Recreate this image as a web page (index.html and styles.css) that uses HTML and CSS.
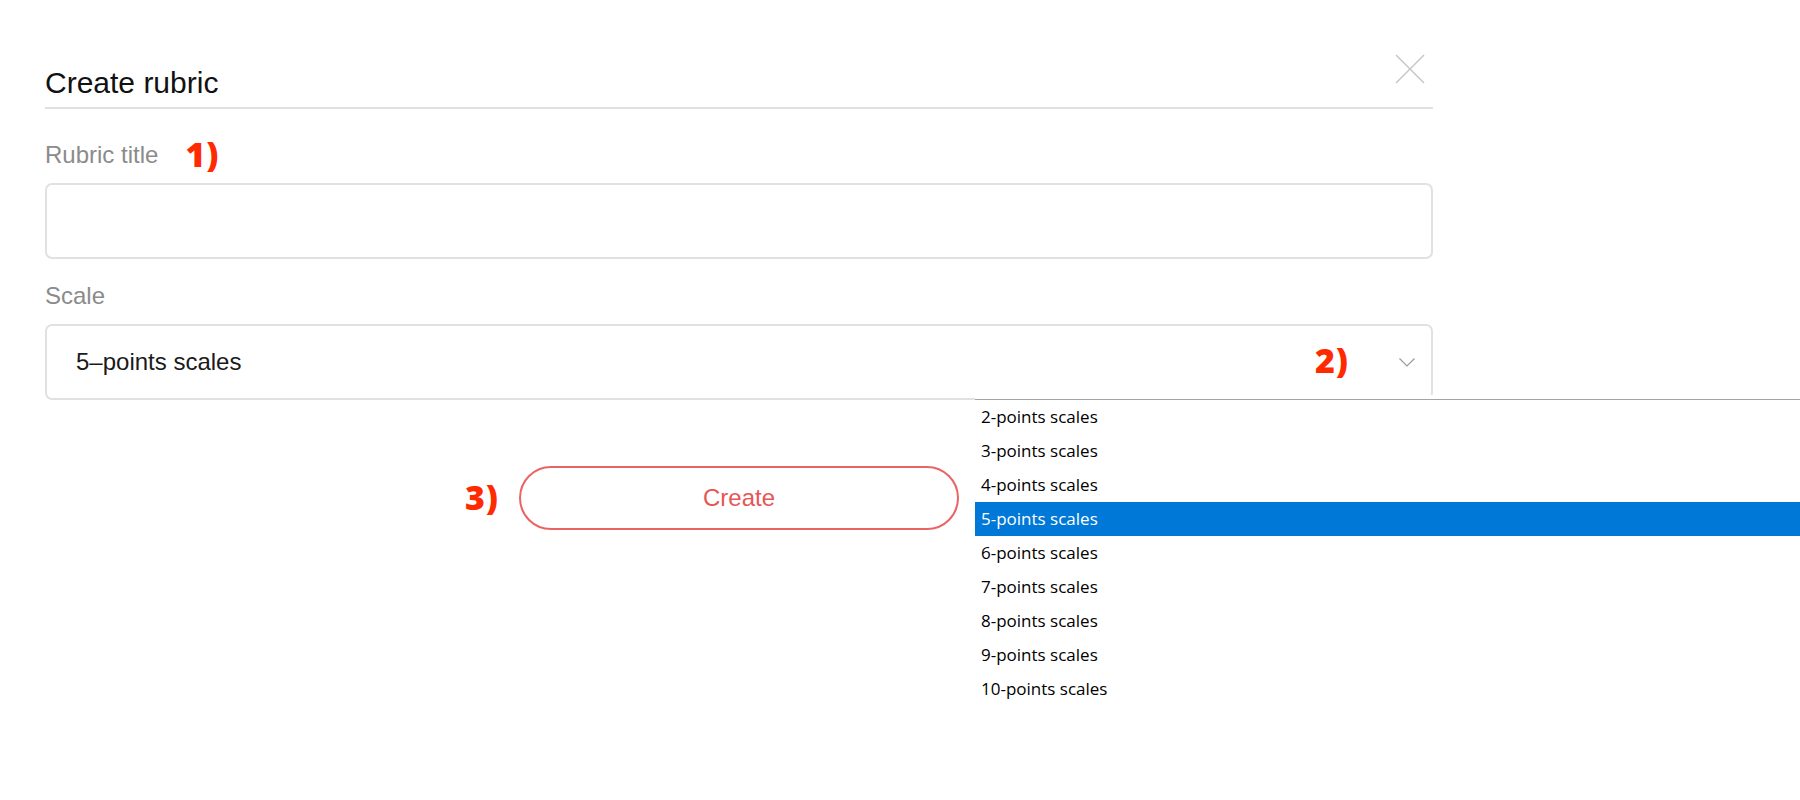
FILE: index.html
```html
<!DOCTYPE html>
<html lang="en">
<head>
<meta charset="utf-8">
<title>Create rubric</title>
<link rel="stylesheet" href="styles.css">
</head>
<body>
<div class="dialog">
  <div class="header">
    <h1 class="title">Create rubric</h1>
    <button class="close" type="button" aria-label="Close">
      <svg class="close-icon" viewBox="0 0 30 30" width="30" height="30">
        <line x1="1" y1="1" x2="29" y2="29"/>
        <line x1="29" y1="1" x2="1" y2="29"/>
      </svg>
    </button>
  </div>

  <div class="field field-title">
    <label class="label">Rubric title<span class="mark mark-1">1)</span></label>
    <input class="input" type="text">
  </div>

  <div class="field field-scale">
    <label class="label">Scale</label>
    <div class="select">
      <span class="select-value">5–points scales</span>
      <span class="mark mark-2">2)</span>
      <svg class="chevron" viewBox="0 0 16 9" width="16" height="9">
        <polyline points="0.5,0.5 8,8 15.5,0.5"/>
      </svg>
    </div>
  </div>

  <div class="actions">
    <div class="create-wrap">
      <span class="mark mark-3">3)</span>
      <button class="create" type="button">Create</button>
    </div>
  </div>
</div>

<div class="popup">
  <ul class="options">
    <li class="option">2-points scales</li>
    <li class="option">3-points scales</li>
    <li class="option">4-points scales</li>
    <li class="option option-selected">5-points scales</li>
    <li class="option">6-points scales</li>
    <li class="option">7-points scales</li>
    <li class="option">8-points scales</li>
    <li class="option">9-points scales</li>
    <li class="option">10-points scales</li>
  </ul>
</div>
</body>
</html>
```

FILE: styles.css
```css
html, body {
  margin: 0;
  padding: 0;
  background: #fff;
}

body {
  font-family: "Liberation Sans", Arial, Helvetica, sans-serif;
  color: #111;
}

.dialog {
  width: 1388px;
  padding-left: 45px;
}

.header {
  display: flex;
  justify-content: space-between;
  align-items: flex-start;
  padding-top: 54px;
  padding-bottom: 6px;
  border-bottom: 2px solid #e1e1e1;
}

.title {
  margin: 11px 0 0;
  font-size: 30px;
  line-height: 36px;
  font-weight: normal;
  color: #111;
}

.close {
  width: 30px;
  height: 30px;
  padding: 0;
  margin: 0 8px 0 0;
  border: 0;
  background: none;
}

.close-icon {
  display: block;
}

.close-icon line {
  stroke: #c6c6c6;
  stroke-width: 1.4;
}

.field-title {
  margin-top: 32px;
}

.field-scale {
  margin-top: 23px;
}

.label {
  display: block;
  height: 28px;
  margin-bottom: 14px;
  font-size: 24px;
  line-height: 28px;
  color: #8b8b8b;
  white-space: nowrap;
}

.input {
  display: block;
  box-sizing: border-box;
  width: 100%;
  height: 76px;
  margin: 0;
  padding: 0 29px;
  border: 2px solid #e1e1e1;
  border-radius: 7px;
  background: #fff;
  font: 24px "Liberation Sans", Arial, sans-serif;
  outline: none;
}

.select {
  display: flex;
  align-items: center;
  box-sizing: border-box;
  height: 76px;
  padding: 0 16px 0 29px;
  border: 2px solid #e1e1e1;
  border-radius: 7px;
  background: #fff;
}

.select-value {
  flex: 1;
  font-size: 24px;
  line-height: 28px;
  color: #1a1a1a;
}

.chevron {
  display: block;
  flex: none;
}

.chevron polyline {
  fill: none;
  stroke: #9a9a9a;
  stroke-width: 1.2;
}

.mark {
  font-family: "Open Sans", "Noto Sans", sans-serif;
  font-weight: 800;
  font-size: 34px;
  color: #ff2a00;
  letter-spacing: 1px;
}

.mark-1 {
  margin-left: 27px;
  line-height: 0;
  vertical-align: -4px;
}

.mark-2 {
  line-height: 34px;
  margin-right: 50px;
  margin-bottom: 4px;
}

.actions {
  display: flex;
  justify-content: center;
  margin-top: 66px;
}

.create-wrap {
  position: relative;
}

.mark-3 {
  position: absolute;
  right: 100%;
  top: 50%;
  margin-right: 20px;
  line-height: 34px;
  transform: translateY(-52%);
}

.create {
  display: block;
  width: 440px;
  height: 64px;
  margin: 0;
  padding: 0;
  border: 2px solid #ea6464;
  border-radius: 32px;
  background: #fff;
  color: #e65656;
  font: 24px "Liberation Sans", Arial, sans-serif;
}

.popup {
  position: absolute;
  top: 395px;
  left: 975px;
  right: 0;
  padding-top: 4px;
  background: #fff;
}

.options {
  margin: 0;
  padding: 0;
  list-style: none;
  border-top: 1px solid #a3a3a3;
}

.option {
  height: 34px;
  padding-left: 6px;
  font-family: "Open Sans", "Noto Sans", sans-serif;
  font-size: 17px;
  line-height: 34px;
  color: #000;
  white-space: nowrap;
}

.option-selected {
  background: #0078d7;
  color: #fff;
}
```
